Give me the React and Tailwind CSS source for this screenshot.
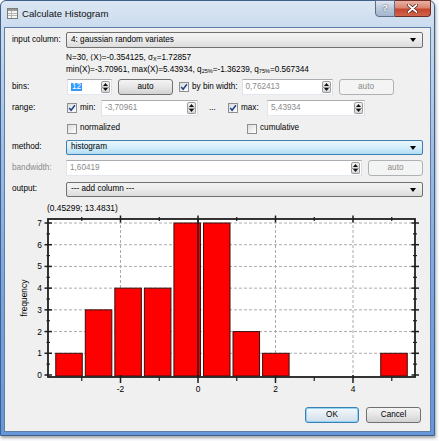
import React from "react";

const counts = [1, 3, 4, 4, 7, 7, 2, 1, 0, 0, 0, 1];
const X = (v) => 198 + v * 38.75;
const Y = (v) => 375 - v * 21.714;

function Check({ checked }) {
  return (
    <span className="flex h-[10px] w-[10px] shrink-0 items-center justify-center border border-[#8e8f8f] bg-gradient-to-br from-[#dcdcdc] to-[#ffffff]">
      {checked && (
        <svg width="8" height="8" viewBox="0 0 8 8">
          <path d="M1.2 4 L3.1 6.3 L6.9 1.2" fill="none" stroke="#21408a" strokeWidth="1.5" />
        </svg>
      )}
    </span>
  );
}

function SpinArrows() {
  return (
    <div className="ml-auto flex w-[11px] shrink-0 flex-col p-[1px]">
      <div className="flex flex-1 items-center justify-center rounded-t-[2px] border border-[#9a9a9a] bg-gradient-to-b from-[#f7f7f7] to-[#dadada]">
        <svg width="5" height="3" viewBox="0 0 5 3">
          <path d="M0 3 L2.5 0 L5 3Z" fill="#111" />
        </svg>
      </div>
      <div className="flex flex-1 items-center justify-center rounded-b-[2px] border border-t-0 border-[#9a9a9a] bg-gradient-to-b from-[#f0f0f0] to-[#d4d4d4]">
        <svg width="5" height="3" viewBox="0 0 5 3">
          <path d="M0 0 L2.5 3 L5 0Z" fill="#111" />
        </svg>
      </div>
    </div>
  );
}

function Spin({ className, children }) {
  return (
    <div
      className={
        "flex h-[16px] items-stretch border border-[#abadb3] border-b-[#e3e9ef] border-l-[#e2e3ea] border-r-[#dbdfe6] bg-white " +
        className
      }
    >
      <div className="flex items-center pl-[3px]">{children}</div>
      <SpinArrows />
    </div>
  );
}

function Combo({ className, children }) {
  return (
    <div className={"flex items-center justify-between rounded-[2px] border pl-[4px] pr-[6px] " + className}>
      <span>{children}</span>
      <svg width="6" height="4" viewBox="0 0 6 4">
        <path d="M0 0 L6 0 L3 4Z" fill="#000" />
      </svg>
    </div>
  );
}

function Btn({ className, children }) {
  return (
    <div className={"flex h-[16px] items-center justify-center rounded-[3px] border " + className}>{children}</div>
  );
}

export default function App() {
  return (
    <div className="relative h-[441px] w-[439px] overflow-hidden bg-[#fbfcfd] font-['Liberation_Sans',Arial,sans-serif] text-[8.2px] leading-none text-black">
      {/* window frame */}
      <div className="flex h-[436px] w-[435px] flex-col rounded-t-[6px] border border-[#3f5f8c] bg-[linear-gradient(180deg,#dbe6f2_0%,#c9daee_7%,#9dbde6_35%,#77a2de_70%,#6696da_100%)] shadow-[1px_2px_3px_rgba(0,0,0,0.35)]">
        {/* title bar */}
        <div className="flex h-[26px] shrink-0 items-start">
          <div className="ml-[6px] mt-[7px]">
            <svg width="11" height="11" viewBox="0 0 11 11">
              <rect x="0.5" y="0.5" width="10" height="10" fill="#f6f6f6" stroke="#7b7b7b" />
              <rect x="1" y="1" width="9" height="2" fill="#9a9a9a" />
              <line x1="1" y1="5.5" x2="10" y2="5.5" stroke="#b5b5b5" />
              <line x1="1" y1="7.5" x2="10" y2="7.5" stroke="#b5b5b5" />
              <line x1="4.5" y1="3" x2="4.5" y2="10" stroke="#b5b5b5" />
            </svg>
          </div>
          <div className="ml-[4px] mt-[8px] text-[9.6px] text-[#111]">Calculate Histogram</div>
          <div className="ml-auto mr-[3px] mt-[-1px] flex">
            <div className="flex h-[17px] w-[20px] items-center justify-center rounded-bl-[4px] border border-[#5b6f8c] bg-gradient-to-b from-[#dfe7f1] via-[#b9c8db] to-[#a3b6cf] text-[9px] font-bold text-white [text-shadow:0_0_2px_#334]">
              ?
            </div>
            <div className="flex h-[17px] w-[36px] items-center justify-center rounded-br-[4px] border border-l-0 border-[#6b2c22] bg-[linear-gradient(180deg,#eab1a4_0%,#d98571_45%,#c6452d_55%,#d0644b_100%)]">
              <svg width="11" height="9" viewBox="0 0 11 9">
                <path d="M1.5 1 L9.5 8 M9.5 1 L1.5 8" stroke="#4a1a12" strokeWidth="3.2" strokeLinecap="round" />
                <path d="M1.5 1 L9.5 8 M9.5 1 L1.5 8" stroke="#fff" strokeWidth="1.8" strokeLinecap="round" />
              </svg>
            </div>
          </div>
        </div>

        {/* client */}
        <div className="mx-[3px] mb-[3px] flex flex-1 flex-col border border-[#5f7ea6] bg-[#f0f0f0] pl-[7px] pr-[7px] pt-[4px]">
          {/* input column */}
          <div className="flex h-[16px] items-center">
            <div className="w-[54px] shrink-0">input column:</div>
            <Combo className="h-[16px] flex-1 border-[#707070] bg-gradient-to-b from-[#f4f4f4] via-[#ebebeb] to-[#dcdcdc]">
              4: gaussian random variates
            </Combo>
          </div>

          {/* stats */}
          <div className="ml-[54px] mt-[4px] flex flex-col">
            <div className="flex h-[12px] items-center">
              N=30, ⟨X⟩=-0.354125, σ<sub className="text-[5.5px]">X</sub>=1.72857
            </div>
            <div className="flex h-[12px] items-center">
              min(X)=-3.70961, max(X)=5.43934, q<sub className="text-[5.5px]">25%</sub>=-1.36239, q
              <sub className="text-[5.5px]">75%</sub>=0.567344
            </div>
          </div>

          {/* bins */}
          <div className="mt-[3px] flex h-[16px] items-center">
            <div className="w-[55px] shrink-0">bins:</div>
            <Spin className="w-[45px]">
              <span className="bg-[#3399ff] px-[1px] text-white">12</span>
            </Spin>
            <Btn className="ml-[6px] w-[55px] border-[#707070] bg-gradient-to-b from-[#f4f4f4] via-[#e6e6e6] to-[#d2d2d2]">
              auto
            </Btn>
            <div className="ml-[6px] flex items-center">
              <Check checked />
              <span className="ml-[3px]">by bin width:</span>
            </div>
            <Spin className="ml-[4px] w-[91px]">
              <span className="text-[#8a8a8a]">0,762413</span>
            </Spin>
            <Btn className="ml-[6px] w-[55px] border-[#adb2b5] bg-[#f4f4f4] text-[#8a8a8a]">auto</Btn>
          </div>

          {/* range */}
          <div className="mt-[5px] flex h-[16px] items-center">
            <div className="w-[55px] shrink-0">range:</div>
            <Check checked />
            <span className="ml-[3px] w-[21px]">min:</span>
            <Spin className="w-[97px]">
              <span className="text-[#8a8a8a]">-3,70961</span>
            </Spin>
            <span className="ml-[11px] w-[19px]">...</span>
            <Check checked />
            <span className="ml-[3px] w-[26px]">max:</span>
            <Spin className="w-[98px]">
              <span className="text-[#8a8a8a]">5,43934</span>
            </Spin>
          </div>

          {/* normalized / cumulative */}
          <div className="mt-[7px] flex h-[11px] items-center">
            <div className="w-[55px] shrink-0" />
            <Check />
            <span className="ml-[3px] w-[167px]">normalized</span>
            <Check />
            <span className="ml-[3px]">cumulative</span>
          </div>

          {/* method */}
          <div className="mt-[6px] flex h-[15px] items-center">
            <div className="w-[54px] shrink-0">method:</div>
            <Combo className="h-[15px] flex-1 border-[#3c7fb1] bg-gradient-to-b from-[#eaf6fd] via-[#d3edfb] to-[#b2ddf5]">
              histogram
            </Combo>
          </div>

          {/* bandwidth */}
          <div className="mt-[5px] flex h-[16px] items-center">
            <div className="w-[54px] shrink-0 text-[#8a8a8a]">bandwidth:</div>
            <Spin className="w-[296px]">
              <span className="text-[#8a8a8a]">1,60419</span>
            </Spin>
            <Btn className="ml-[6px] w-[55px] border-[#adb2b5] bg-[#f4f4f4] text-[#8a8a8a]">auto</Btn>
          </div>

          {/* output */}
          <div className="mt-[6px] flex h-[15px] items-center">
            <div className="w-[54px] shrink-0">output:</div>
            <Combo className="h-[15px] flex-1 border-[#707070] bg-gradient-to-b from-[#f4f4f4] via-[#ebebeb] to-[#dcdcdc]">
              --- add column ---
            </Combo>
          </div>

          {/* plot */}
          <div className="-ml-[7px] h-[201px] w-[425px]">
            <svg width="425" height="201" viewBox="5 197 425 201" className="block" fontFamily="'Liberation Sans', Arial, sans-serif">
              <text x="47" y="211" fontSize="8.4" fill="#000">
                (0.45299; 13.4831)
              </text>
              <rect x="48" y="219" width="367" height="158" fill="#fff" />
              {[1, 2, 3, 4, 5, 6, 7].map((k) => (
                <line key={"h" + k} x1="49" x2="414" y1={Y(k)} y2={Y(k)} stroke="#a3a3a3" strokeWidth="0.9" strokeDasharray="3 2" />
              ))}
              {[-2, 2, 4].map((v) => (
                <line key={"v" + v} x1={X(v)} x2={X(v)} y1="220" y2="376" stroke="#a3a3a3" strokeWidth="0.9" strokeDasharray="3 2" />
              ))}
              {counts.map((c, i) => {
                if (!c) return null;
                const x0 = X(-3.70961 + i * 0.762413);
                const w = 0.762413 * 38.75;
                return (
                  <rect
                    key={"b" + i}
                    x={x0 + 1.5}
                    y={Y(c)}
                    width={w - 3}
                    height={375 - Y(c) + 1}
                    fill="#ff0000"
                    stroke="#3a1010"
                    strokeWidth="1"
                  />
                );
              })}
              <line x1={X(0)} x2={X(0)} y1="219" y2="377" stroke="#1a1a1a" strokeWidth="1.4" />
              <rect x="48" y="219" width="367" height="158" fill="none" stroke="#1e1e1e" strokeWidth="1.8" />
              {[-2, 0, 2, 4].map((v) => (
                <g key={"xt" + v}>
                  <line x1={X(v)} x2={X(v)} y1="215.5" y2="222.5" stroke="#1e1e1e" strokeWidth="1.5" />
                  <line x1={X(v)} x2={X(v)} y1="375" y2="383" stroke="#1e1e1e" strokeWidth="1.5" />
                  <text x={X(v)} y="392" fontSize="8.4" textAnchor="middle" fill="#000">
                    {v}
                  </text>
                </g>
              ))}
              {[-3, -1, 1, 3, 5].map((v) => (
                <g key={"xm" + v}>
                  <line x1={X(v)} x2={X(v)} y1="217" y2="221" stroke="#1e1e1e" strokeWidth="1.2" />
                  <line x1={X(v)} x2={X(v)} y1="377" y2="381" stroke="#1e1e1e" strokeWidth="1.2" />
                </g>
              ))}
              {[0, 1, 2, 3, 4, 5, 6, 7].map((k) => (
                <g key={"yt" + k}>
                  <line x1="44.5" x2="52" y1={Y(k)} y2={Y(k)} stroke="#1e1e1e" strokeWidth="1.5" />
                  <line x1="411.5" x2="419" y1={Y(k)} y2={Y(k)} stroke="#1e1e1e" strokeWidth="1.5" />
                  <text x="42" y={Y(k) + 3} fontSize="8.4" textAnchor="end" fill="#000">
                    {k}
                  </text>
                </g>
              ))}
              {[0.5, 1.5, 2.5, 3.5, 4.5, 5.5, 6.5].map((k) => (
                <g key={"ym" + k}>
                  <line x1="46.5" x2="50" y1={Y(k)} y2={Y(k)} stroke="#1e1e1e" strokeWidth="1.2" />
                  <line x1="413" x2="417" y1={Y(k)} y2={Y(k)} stroke="#1e1e1e" strokeWidth="1.2" />
                </g>
              ))}
              <text x="0" y="0" fontSize="8.4" textAnchor="middle" fill="#000" transform="translate(26.5 298) rotate(-90)">
                frequency
              </text>
            </svg>
          </div>

          {/* buttons */}
          <div className="mt-[9px] flex h-[16px] justify-end gap-[7px] pr-[2px]">
            <Btn className="w-[54px] border-[#3c7fb1] bg-gradient-to-b from-[#f4f8fb] via-[#e3ecf3] to-[#d1dde8] shadow-[inset_0_0_0_1px_#8fd3f5]">
              OK
            </Btn>
            <Btn className="w-[55px] border-[#707070] bg-gradient-to-b from-[#f4f4f4] via-[#e6e6e6] to-[#d2d2d2]">
              Cancel
            </Btn>
          </div>
        </div>
      </div>
    </div>
  );
}
